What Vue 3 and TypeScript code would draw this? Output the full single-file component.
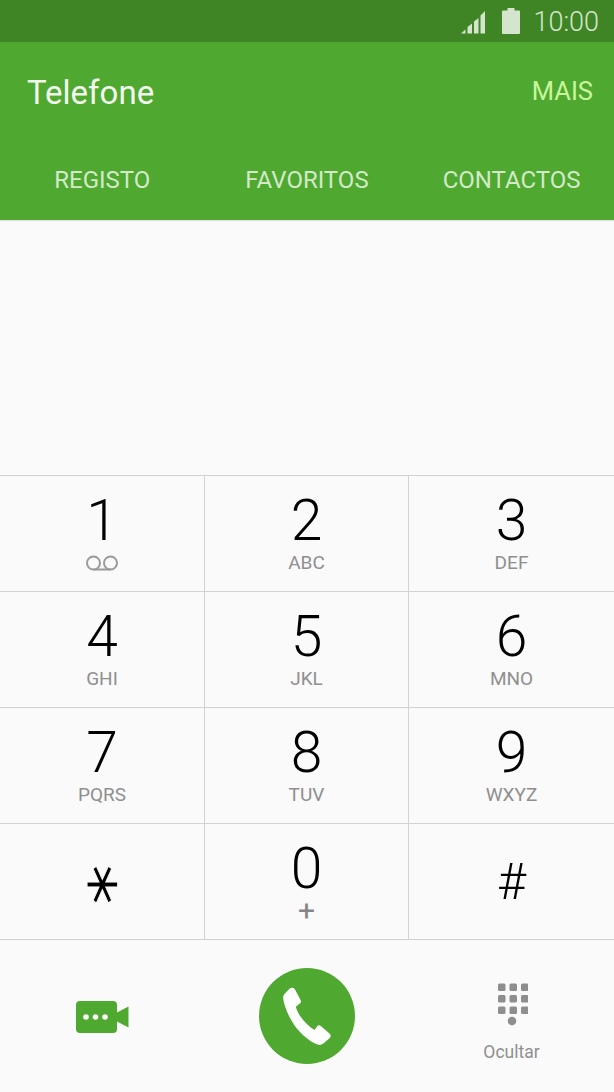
<template>
  <div class="phone">
    <!-- Status bar -->
    <div class="status-bar">
      <svg class="signal" width="24" height="24" viewBox="0 0 24 24">
        <path d="M0 23.500 4.500 19.500v4zM6.500 23.500V17l4.500-3.500v10zM13 23.500V11.500L17.500 8v15.500zM19.500 23.500V5.500L24 1v22.500z" fill="#d5e5cd"/>
      </svg>
      <svg class="battery" width="18" height="26" viewBox="0 0 18 26">
        <path d="M5.500 0h7v2.500H17a1 1 0 0 1 1 1V25a1 1 0 0 1-1 1H1a1 1 0 0 1-1-1V3.500a1 1 0 0 1 1-1h4.500z" fill="#d5e5cd"/>
      </svg>
      <span class="clock">10:00</span>
    </div>

    <!-- Header -->
    <header class="app-header">
      <div class="title-row">
        <h1 class="title">Telefone</h1>
        <span class="more">MAIS</span>
      </div>
      <nav class="tabs">
        <span v-for="tab in tabs" :key="tab" class="tab">{{ tab }}</span>
      </nav>
    </header>

    <!-- Number display -->
    <div class="display" />

    <!-- Keypad -->
    <div class="keypad">
      <div v-for="key in keys" :key="key.digit" class="key">
        <span class="digit" :class="{ 'digit--star': key.digit === '⚹', 'digit--hash': key.digit === '#' }">{{ key.digit }}</span>
        <svg v-if="key.digit === '1'" class="voicemail" width="34" height="16" viewBox="0 0 34 16" fill="none">
          <circle cx="8.500" cy="8" r="6.500" stroke="#9a9a9a" stroke-width="2"/>
          <circle cx="25.500" cy="8" r="6.500" stroke="#9a9a9a" stroke-width="2"/>
          <path d="M8.500 14.500h17" stroke="#9a9a9a" stroke-width="2"/>
        </svg>
        <span v-else-if="key.sub" class="sub" :class="{ 'sub--plus': key.sub === '+' }">{{ key.sub }}</span>
      </div>
    </div>

    <!-- Bottom actions -->
    <div class="actions">
      <div class="action action--video">
        <svg width="53" height="32" viewBox="0 0 53 32">
          <path d="M4 0h33a4 4 0 0 1 4 4v24a4 4 0 0 1-4 4H4a4 4 0 0 1-4-4V4a4 4 0 0 1 4-4z" fill="#4fa830"/>
          <path d="M41 11.500 52.500 5.500v21L41 20.500z" fill="#4fa830"/>
          <circle cx="10" cy="16" r="2.800" fill="#fafafa"/>
          <circle cx="19.500" cy="16" r="2.800" fill="#fafafa"/>
          <circle cx="29" cy="16" r="2.800" fill="#fafafa"/>
        </svg>
      </div>
      <div class="action">
        <button class="call-btn" type="button">
          <svg width="48" height="58" viewBox="0 0 48 58">
            <path d="M1 7.500 6.500 1.800C8.300.2 10.800.5 12 2.500L17.600 13C18.300 14.400 18 15.600 16.800 16.500L12.800 19.800C15 28 23 38 31.500 43L34 39.500C35 38.200 36.500 38 37.800 39L46.500 46.500C48 47.800 48 50 46.500 51.300L40 56.800C38 58.300 35.500 58.300 32.500 56.800 16 48.500 5 32 .6 14 0 11.500-.1 9 1 7.500z" fill="#fff"/>
          </svg>
        </button>
      </div>
      <div class="action action--hide">
        <svg width="32" height="44" viewBox="0 0 32 44">
          <g fill="#8e8e8e">
            <rect v-for="d in dots" :key="d.id" :x="d.x" :y="d.y" width="7.500" height="7.500" rx="1.500"/>
            <circle cx="16" cy="39" r="4.300"/>
          </g>
        </svg>
        <span class="hide-label">Ocultar</span>
      </div>
    </div>
  </div>
</template>

<script setup lang="ts">
interface Key {
  digit: string
  sub?: string
}

const tabs = ['REGISTO', 'FAVORITOS', 'CONTACTOS']

const keys: Key[] = [
  { digit: '1' },
  { digit: '2', sub: 'ABC' },
  { digit: '3', sub: 'DEF' },
  { digit: '4', sub: 'GHI' },
  { digit: '5', sub: 'JKL' },
  { digit: '6', sub: 'MNO' },
  { digit: '7', sub: 'PQRS' },
  { digit: '8', sub: 'TUV' },
  { digit: '9', sub: 'WXYZ' },
  { digit: '⚹' },
  { digit: '0', sub: '+' },
  { digit: '#' },
]

const dots = [0, 1, 2].flatMap((row) =>
  [0, 1, 2].map((col) => ({ id: row * 3 + col, x: 2 + col * 11.5, y: 1.5 + row * 11.5 })),
)
</script>

<style scoped>
.phone {
  width: 614px;
  height: 1092px;
  display: flex;
  flex-direction: column;
  background: #fafafa;
  font-family: Roboto, "Liberation Sans", sans-serif;
  overflow: hidden;
}

/* Status bar */
.status-bar {
  height: 42px;
  flex-shrink: 0;
  display: flex;
  align-items: center;
  justify-content: flex-end;
  padding-right: 15px;
  background: #3f8526;
}

.signal { margin-right: 17px; margin-top: 1px; }
.battery { margin-right: 13px; }

.clock {
  font-size: 27px;
  font-weight: 300;
  color: #d5e5cd;
  margin-top: 2px;
}

/* Header */
.app-header {
  height: 178px;
  flex-shrink: 0;
  display: flex;
  flex-direction: column;
  background: #4fa830;
  box-shadow: 0 1px 1px rgba(0, 0, 0, 0.1);
}

.title-row {
  display: flex;
  align-items: center;
  justify-content: space-between;
  padding: 31px 21px 0 27px;
}

.title {
  margin: 0;
  font-size: 33px;
  font-weight: 400;
  color: #f2f8ee;
}

.more {
  font-size: 25.500px;
  color: #c9f79c;
  margin-top: -3px;
}

.tabs {
  display: grid;
  grid-template-columns: repeat(3, 204.67px);
  margin-top: 54px;
}

.tab {
  text-align: center;
  font-size: 24px;
  color: #d3e9c8;
}

.display {
  height: 255px;
  flex-shrink: 0;
}

/* Keypad */
.keypad {
  display: grid;
  grid-template-columns: 205px 204px 205px;
  grid-auto-rows: 116px;
  border-top: 1px solid #d2d2d2;
  flex-shrink: 0;
}

.key {
  display: flex;
  flex-direction: column;
  align-items: center;
  border-right: 1px solid #d2d2d2;
  border-bottom: 1px solid #d2d2d2;
}

.key:nth-child(3n) { border-right: none; }

.digit {
  height: 62px;
  margin-top: 14px;
  font-size: 57px;
  line-height: 62px;
  font-weight: 300;
  color: #000;
}

/* the glyph is heavier and flatter than the keypad's star, so thin and stretch it */
.digit--star {
  font-family: "DejaVu Sans", sans-serif;
  margin-top: 23px;
  transform: scale(0.95, 1.22);
  -webkit-text-stroke: 0.8px #fafafa;
}

.digit--hash {
  font-size: 50px;
  margin-top: 27px;
}

.sub {
  font-size: 19px;
  line-height: 24px;
  margin-top: -1px;
  color: #8f8f8f;
}

.sub--plus {
  font-size: 30px;
  line-height: 24px;
  margin-top: -1px;
  font-weight: 400;
  color: #858585;
}

.voicemail { margin-top: 3px; }

/* Bottom actions */
.actions {
  flex: 1;
  display: grid;
  grid-template-columns: 205px 204px 205px;
  align-items: center;
}

.action {
  display: flex;
  flex-direction: column;
  align-items: center;
}

.action--video { padding-right: 1px; padding-top: 1px; }

.call-btn {
  width: 96px;
  height: 96px;
  display: flex;
  align-items: center;
  justify-content: center;
  padding: 0;
  border: none;
  border-radius: 50%;
  background: #4fa830;
}

.action--hide { padding-top: 12px; }

.hide-label {
  margin-top: 16px;
  font-size: 17.500px;
  color: #8f8f8f;
}
</style>
